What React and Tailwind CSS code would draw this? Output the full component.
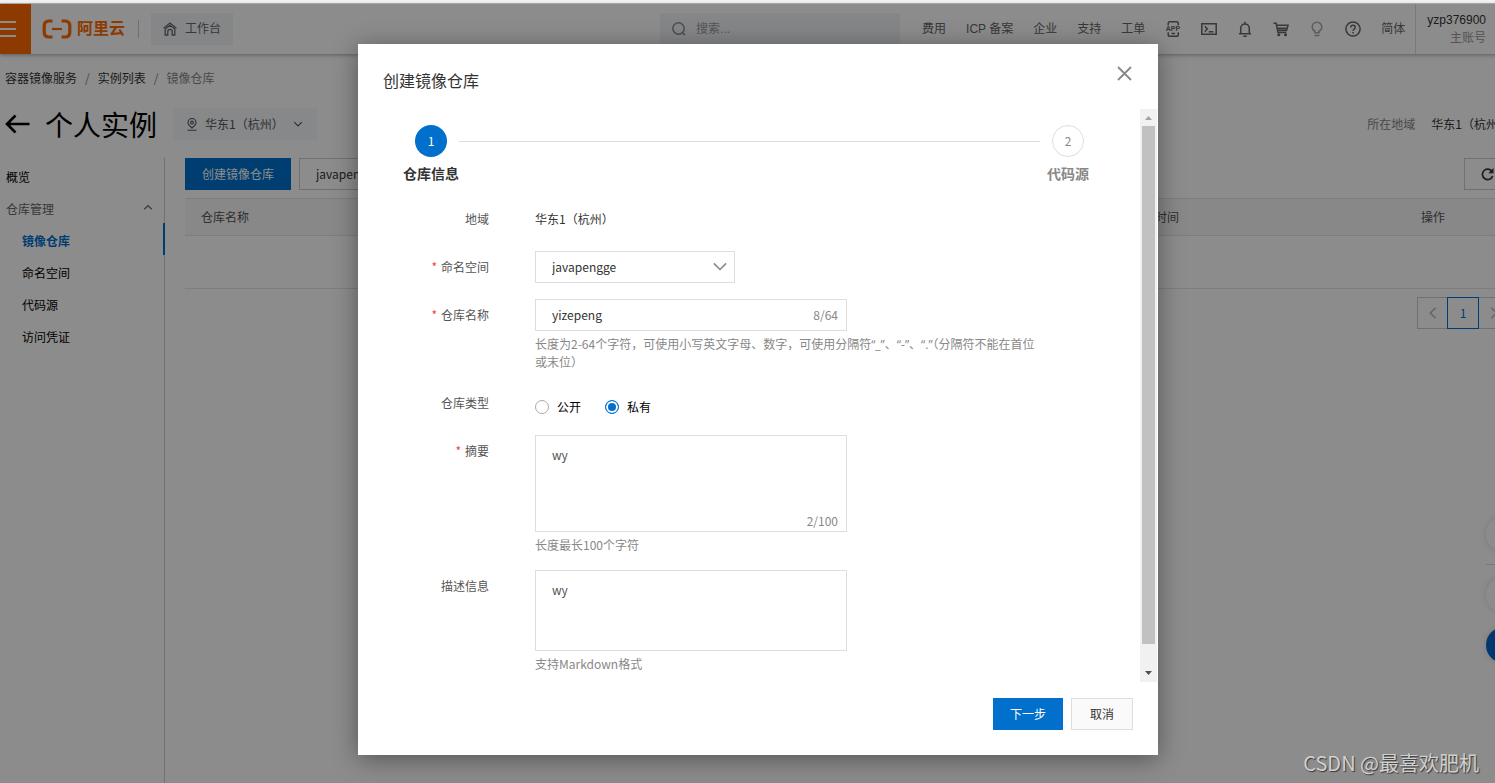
import { useState } from "react";

const uiFont = 'font-["Noto_Sans_CJK_SC",sans-serif]';
const headerFont = 'font-["Liberation_Sans","Noto_Sans_CJK_SC",sans-serif]';

function Chevron({ className, d = "M2 5l6 6 6-6", w = 1.5 }) {
  return (
    <svg viewBox="0 0 16 16" className={className} fill="none" stroke="currentColor" strokeWidth={w} aria-hidden="true">
      <path d={d} />
    </svg>
  );
}

function Logo() {
  return (
    <a href="#home" className="flex items-center gap-[5px] text-[#ff6a00]">
      <svg width="30" height="20" viewBox="0 0 30 20" fill="none" stroke="currentColor" aria-hidden="true">
        <path d="M10.500 2H6.200Q2.200 2.600 2.200 6.500V13.500Q2.200 17.400 6.200 18H10.500" strokeWidth="3.200" />
        <path d="M19.500 2H23.800Q27.800 2.600 27.800 6.500V13.500Q27.800 17.400 23.800 18H19.500" strokeWidth="3.200" />
        <path d="M10 10H20" strokeWidth="2.200" />
      </svg>
      <span className="text-base leading-6 font-bold">阿里云</span>
    </a>
  );
}

const headerIcons = [
  {
    name: "App",
    art: (
      <>
        <path d="M3.200 4.300V2.600Q3.200 .8 5 .8h6.500q1.800 0 1.800 1.800v1.700M3.200 11.300v2.100q0 1.800 1.800 1.800h6.500q1.800 0 1.800-1.800v-2.100M6.500 12.600h3.500" />
        <text x="8" y="10.300" textAnchor="middle" fontSize="7" fontWeight="bold" fill="currentColor" stroke="none">APP</text>
      </>
    ),
  },
  {
    name: "Cloud Shell",
    art: <path d="M.8 2.700h14.400v10.600H.8zM3.800 5.300L6.300 8l-2.500 2.700M7.700 10.800h4.600" />,
  },
  {
    name: "消息",
    art: <path d="M8 .8v1.700M3.700 12.500V7.200a4.300 4.300 0 018.600 0v5.300M2 12.800h12M6.300 15.200h3.400" />,
  },
  {
    name: "购物车",
    art: (
      <>
        <path d="M.5 2.300h2.600l1.900 9.200h8.400" />
        <path d="M4 4.300h11l-1.500 5.200H5" />
        <path d="M4.500 7.500h9" strokeWidth="2" />
        <circle cx="5.800" cy="13.800" r=".8" fill="currentColor" />
        <circle cx="12.500" cy="13.800" r=".8" fill="currentColor" />
      </>
    ),
  },
  {
    name: "提示",
    light: true,
    art: <path d="M6 11.800v-1.600C4.200 9.400 3.200 7.800 3.200 6a4.800 4.800 0 019.600 0c0 1.800-1 3.400-2.800 4.200v1.600zM5.500 14.600h5" />,
  },
  {
    name: "帮助",
    art: (
      <>
        <circle cx="8" cy="8" r="7.100" />
        <path d="M5.800 6.500a2.200 2.200 0 114.400 0c0 1.500-2.200 1.600-2.200 3.300" />
        <path d="M8 11v1.500" />
      </>
    ),
  },
];

function Header() {
  return (
    <header className={`${headerFont} relative flex h-[50px] shrink-0 items-center bg-white text-xs text-[#666] shadow-[0_1px_4px_rgba(0,0,0,0.35)]`}>
      <button aria-label="菜单" className="h-full w-[31px] bg-[#ff6a00] text-white">
        <svg width="16" height="16" viewBox="0 0 16 16" stroke="currentColor" strokeWidth="1.800" aria-hidden="true">
          <path d="M0 1h16M0 8h16M0 15h16" />
        </svg>
      </button>
      <div className="ml-[11px]"><Logo /></div>
      <div className="mr-3 ml-[13px] h-[18px] w-px bg-[#ccc]" />
      <button className="flex h-8 items-center gap-2 bg-[#f3f5f7] px-3">
        <svg width="14" height="14" viewBox="0 0 14 14" fill="none" stroke="currentColor" strokeWidth="1.300" aria-hidden="true">
          <path d="M.6 6.200L7 1l6.400 5.200M2.200 7v6h2.600V9.500a2.200 2.200 0 014.400 0V13h2.600V7L7 3.300z" />
        </svg>
        工作台
      </button>
      <div className="flex flex-1 justify-end">
        <label className="flex h-8 w-60 items-center gap-2.5 bg-[#f3f5f7] px-3">
          <svg width="14" height="14" viewBox="0 0 14 14" fill="none" stroke="#888" strokeWidth="1.400" aria-hidden="true">
            <circle cx="6.500" cy="6.500" r="5.700" />
            <path d="M10.500 10.500L13 13.300" />
          </svg>
          <input aria-label="搜索" placeholder="搜索..." className="min-w-0 flex-1 bg-transparent outline-none placeholder:text-[#999]" />
        </label>
      </div>
      <nav className="ml-[22px] flex gap-5">
        {["费用", "ICP 备案", "企业", "支持", "工单"].map((t) => (
          <a key={t} href="#nav">{t}</a>
        ))}
      </nav>
      <div className="mx-5 flex gap-5">
        {headerIcons.map((i) => (
          <button key={i.name} aria-label={i.name} className={i.light ? "text-[#a5abb0]" : ""}>
            <svg width="16" height="16" viewBox="0 0 16 16" fill="none" stroke="currentColor" strokeWidth="1.500" className="overflow-visible" aria-hidden="true">{i.art}</svg>
          </button>
        ))}
      </div>
      <button>简体</button>
      <div className="ml-2.5 flex h-full flex-col justify-center border-l border-[#ddd] pr-[30px] pl-[11px] text-right leading-[18px]">
        <span className="text-[#333]">yzp376900</span>
        <span className="text-[#999]">主账号</span>
      </div>
    </header>
  );
}

function PageHead() {
  return (
    <>
      <nav className="mt-[15px] flex gap-2 pl-[5px] text-xs leading-[18px] text-[#333]">
        <a href="#acr">容器镜像服务</a>
        <span className="text-[#888]">/</span>
        <a href="#list">实例列表</a>
        <span className="text-[#888]">/</span>
        <span className="text-[#888]">镜像仓库</span>
      </nav>
      <div className="mt-[21px] flex h-8 items-center pr-1.5 pl-[5px] text-xs">
        <button aria-label="返回" className="text-black">
          <svg width="25" height="20" viewBox="0 0 25 20" fill="none" stroke="currentColor" strokeWidth="2.600" aria-hidden="true">
            <path d="M24.500 10H2M10.500 1.500L2 10l8.500 8.500" />
          </svg>
        </button>
        <h1 className="ml-[15px] text-[28px] leading-8 font-normal text-black">个人实例</h1>
        <button className="ml-4 flex h-8 items-center bg-[#f5f7fa] px-3.5 text-[#555]">
          <svg width="10" height="13" viewBox="0 0 10 13" fill="none" stroke="currentColor" strokeWidth="1.100" aria-hidden="true">
            <path d="M5 10C2.500 8 1 6.200 1 4.500a4 4 0 018 0C9 6.200 7.500 8 5 10zM.5 12.300h9" />
            <circle cx="5" cy="4.500" r="1.400" />
          </svg>
          <span className="ml-2">华东1（杭州）</span>
          <Chevron className="ml-[9px] size-2.5" w={1.8} />
        </button>
        <div className="flex flex-1 justify-end gap-4">
          <span className="text-[#888]">所在地域</span>
          <span className="text-[#333]">华东1（杭州）</span>
        </div>
      </div>
    </>
  );
}

function Sidebar() {
  const item = "h-8 pl-[22px]";
  return (
    <nav className="flex w-[165px] shrink-0 flex-col border-r border-[#ccc] pt-px text-xs leading-9 text-black">
      <a href="#overview" className="h-8 pl-1.5">概览</a>
      <button className="flex h-8 justify-between pr-[11px] pl-1.5 text-[#666]">
        仓库管理
        <Chevron className="mt-3 size-2.5" d="M2 10l6-6 6 6" w={1.8} />
      </button>
      <a href="#repos" className="-mr-px h-8 border-r-2 border-[#0070cc] pl-[22px] font-bold text-[#0070cc]">镜像仓库</a>
      <a href="#namespaces" className={item}>命名空间</a>
      <a href="#source" className={item}>代码源</a>
      <a href="#access" className={item}>访问凭证</a>
    </nav>
  );
}

function RepoList() {
  return (
    <main className="min-w-0 flex-1 pr-1.5 pl-5 text-xs text-[#333]">
      <div className="flex gap-2">
        <button className="h-8 bg-[#0070cc] px-[17px] text-white">创建镜像仓库</button>
        <select aria-label="命名空间筛选" className="h-8 w-[200px] appearance-none border border-[#ccc] px-4">
          <option>javapengge</option>
        </select>
        <button aria-label="刷新" className="ml-auto flex h-8 w-[46px] items-center justify-center border border-[#ccc]">
          <svg width="13" height="13" viewBox="0 0 13 13" fill="none" stroke="currentColor" strokeWidth="1.700" aria-hidden="true">
            <path d="M11 3.500A5.200 5.200 0 1011.600 8" />
            <path d="M12.500 0v5.200H7.300z" fill="currentColor" stroke="none" />
          </svg>
        </button>
      </div>
      <table className="mt-2 w-full table-fixed border-y border-[#e3e3e3] text-left">
        <thead>
          <tr className="h-[37px] border-b border-[#e3e3e3] bg-[#f8f8f8] text-[#555]">
            <th className="pl-4 font-normal">仓库名称</th>
            <th className="w-[290px] pl-4 font-normal">创建时间</th>
            <th className="w-[105px] pl-4 font-normal">操作</th>
          </tr>
        </thead>
        <tbody>
          <tr className="h-[53px]"><td colSpan={3} /></tr>
        </tbody>
      </table>
      <div className="mt-2 flex justify-end">
        <button aria-label="上一页" className="flex h-8 w-[30px] items-center justify-center border border-r-0 border-[#ccc] text-[#bbb]">
          <Chevron className="size-3.5" d="M11 2L5 8l6 6" w={2} />
        </button>
        <button className="size-8 border border-[#0070cc] text-[#0070cc]">1</button>
        <button aria-label="下一页" className="flex h-8 w-[31px] items-center justify-center border border-l-0 border-[#ccc] text-[#bbb]">
          <Chevron className="size-3.5" d="M5 2l6 6-6 6" w={2} />
        </button>
      </div>
    </main>
  );
}

function Row({ id, label, required, group, children }) {
  const text = (
    <>
      {required && <span className="mr-1 text-[#f23c3c]">*</span>}
      {label}
    </>
  );
  const cls = "w-[86px] shrink-0 text-right leading-8 text-[#555]";
  return (
    <div className="flex gap-[46px]">
      {group ? <span id={id} className={cls}>{text}</span> : <label htmlFor={id} className={cls}>{text}</label>}
      <div className="min-w-0 flex-1">{children}</div>
    </div>
  );
}

function Help({ children }) {
  return <p className="mt-1 max-w-[508px] leading-[18px] text-[#888]">{children}</p>;
}

function Quoted({ children }) {
  return <span className='font-["Open_Sans",sans-serif] leading-none'>“{children}”</span>;
}

function Step({ n, title, active }) {
  return (
    <li className={active ? "flex w-14 flex-col items-center text-[#333]" : "flex w-14 flex-col items-center text-[#888]"}>
      <span className={active ? "flex size-8 items-center justify-center rounded-full bg-[#0070cc] text-white" : "flex size-8 items-center justify-center rounded-full border border-[#dedede]"}>{n}</span>
      <span className="mt-[7px] text-sm leading-[18px] font-bold whitespace-nowrap">{title}</span>
    </li>
  );
}

function CreateDialog() {
  const [name, setName] = useState("yizepeng");
  const [summary, setSummary] = useState("wy");
  const [desc, setDesc] = useState("wy");
  const [type, setType] = useState("私有");
  return (
    <section role="dialog" aria-labelledby="dialog-title" className="mt-10 mb-7 w-[800px] max-w-full self-start bg-white pb-[25px] text-xs text-[#333] shadow-[0_4px_24px_rgba(0,0,0,0.4)]">
      <div className="flex h-[65px] items-start justify-between pr-[26px] pl-[25px]">
        <h2 id="dialog-title" className="mt-6 text-base leading-6">创建镜像仓库</h2>
        <button aria-label="关闭" className="mt-[22px] text-[#888]">
          <svg width="15" height="15" viewBox="0 0 15 15" fill="none" stroke="currentColor" strokeWidth="1.800" aria-hidden="true">
            <path d="M1 1l13 13M14 1L1 14" />
          </svg>
        </button>
      </div>
      <div className="flex pr-px">
        <form className="min-w-0 flex-1 pt-4 pr-11 pb-[9px] pl-[45px]">
          <ol className="flex">
            <Step n="1" title="仓库信息" active />
            <li aria-hidden="true" className="mt-4 h-px flex-1 bg-[#dedede]" />
            <Step n="2" title="代码源" />
          </ol>
          <div className="mt-[21px] flex flex-col gap-4">
            <Row id="region" label="地域" group>
              <span className="leading-8">华东1（杭州）</span>
            </Row>
            <Row id="namespace" label="命名空间" required>
              <div className="relative w-[200px]">
                <select id="namespace" className="block h-8 w-full appearance-none border border-[#dedede] bg-white px-4 outline-none">
                  <option>javapengge</option>
                </select>
                <Chevron className="pointer-events-none absolute top-2 right-2 size-3.5 text-[#888]" d="M1 5l7 7 7-7" w={1.8} />
              </div>
            </Row>
            <Row id="repo" label="仓库名称" required>
              <div className="flex h-8 w-[312px] items-center border border-[#dedede] pr-2 pl-4">
                <input id="repo" value={name} onChange={(e) => setName(e.target.value)} className="min-w-0 flex-1 outline-none" />
                <span className="text-[#888]">{name.length}/64</span>
              </div>
              <Help>
                长度为2-64个字符，可使用小写英文字母、数字，可使用分隔符<Quoted>_</Quoted>、<Quoted>-</Quoted>、<Quoted>.</Quoted>（分隔符不能在首位或末位）
              </Help>
            </Row>
            <Row id="type" label="仓库类型" group>
              <div role="radiogroup" aria-labelledby="type" className="flex h-8 items-center gap-6 pt-2">
                {["公开", "私有"].map((t) => (
                  <label key={t} className="flex items-center gap-2 text-black">
                    <input
                      type="radio"
                      name="type"
                      checked={type === t}
                      onChange={() => setType(t)}
                      className="size-3.5 appearance-none rounded-full border border-[#aaa] bg-white checked:border-[#0070cc] checked:bg-[#0070cc] checked:shadow-[inset_0_0_0_2px_#fff]"
                    />
                    {t}
                  </label>
                ))}
              </div>
            </Row>
            <Row id="summary" label="摘要" required>
              <div className="relative w-[312px]">
                <textarea id="summary" value={summary} onChange={(e) => setSummary(e.target.value)} className="block h-[97px] w-full resize-none border border-[#dedede] px-4 py-2.5 leading-[18px] text-[#555] outline-none" />
                <span className="absolute right-[9px] bottom-0.5 leading-[18px] text-[#888]">{summary.length}/100</span>
              </div>
              <Help>长度最长100个字符</Help>
            </Row>
            <Row id="desc" label="描述信息">
              <textarea id="desc" value={desc} onChange={(e) => setDesc(e.target.value)} className="block h-[81px] w-[312px] resize-none border border-[#dedede] px-4 py-2.5 leading-[18px] text-[#555] outline-none" />
              <Help>支持Markdown格式</Help>
            </Row>
          </div>
        </form>
        <div aria-hidden="true" className="flex w-[17px] flex-col items-center bg-[#f1f1f1]">
          <svg width="17" height="17" viewBox="0 0 17 17"><path d="M5 11l3.500-4 3.500 4z" fill="#a3a3a3" /></svg>
          <div className="w-[13px] flex-1 bg-[#c1c1c1]" />
          <svg width="17" height="38" viewBox="0 0 17 38"><path d="M5 27l3.500 4 3.500-4z" fill="#505050" /></svg>
        </div>
      </div>
      <div className="mt-4 flex justify-end gap-2 pr-[25px]">
        <button className="h-8 bg-[#0070cc] px-[17px] text-white">下一步</button>
        <button className="h-8 w-[62px] border border-[#dedede] bg-[#fafafa]">取消</button>
      </div>
    </section>
  );
}

function FloatingTools() {
  return (
    <div className="absolute top-[512px] -right-7 flex w-[37px] flex-col">
      <button aria-label="咨询" className="size-9 rounded-full bg-white shadow-[0_0_6px_rgba(0,0,0,0.15)]" />
      <div className="my-3 h-px bg-[#ddd]" />
      <button aria-label="反馈" className="size-9 rounded-full bg-white shadow-[0_0_6px_rgba(0,0,0,0.15)]" />
      <button aria-label="更多" className="mt-3.5 size-9 rounded-full bg-[#0064c8] shadow-[0_0_6px_rgba(0,0,0,0.15)]" />
    </div>
  );
}

export default function App() {
  return (
    <div className={`${uiFont} flex min-h-screen flex-col overflow-hidden bg-white`}>
      <div className="h-1 border-b border-[#b5b5b5] bg-[#f2f2f2]" />
      <div className="relative flex w-[calc(100%+21px)] flex-1 flex-col">
        <Header />
        <PageHead />
        <div className="mt-[18px] flex flex-1">
          <Sidebar />
          <RepoList />
        </div>
        <div className="absolute inset-y-0 right-[21px] left-0 overflow-hidden">
          <FloatingTools />
        </div>
        <div className="absolute inset-0 flex justify-center bg-black/45">
          <CreateDialog />
        </div>
        <p className="absolute right-[37px] bottom-1.5 text-xl leading-7 text-[#d0d0d0] [text-shadow:1px_1px_1px_rgba(0,0,0,0.6)]">CSDN @最喜欢肥机</p>
      </div>
    </div>
  );
}
